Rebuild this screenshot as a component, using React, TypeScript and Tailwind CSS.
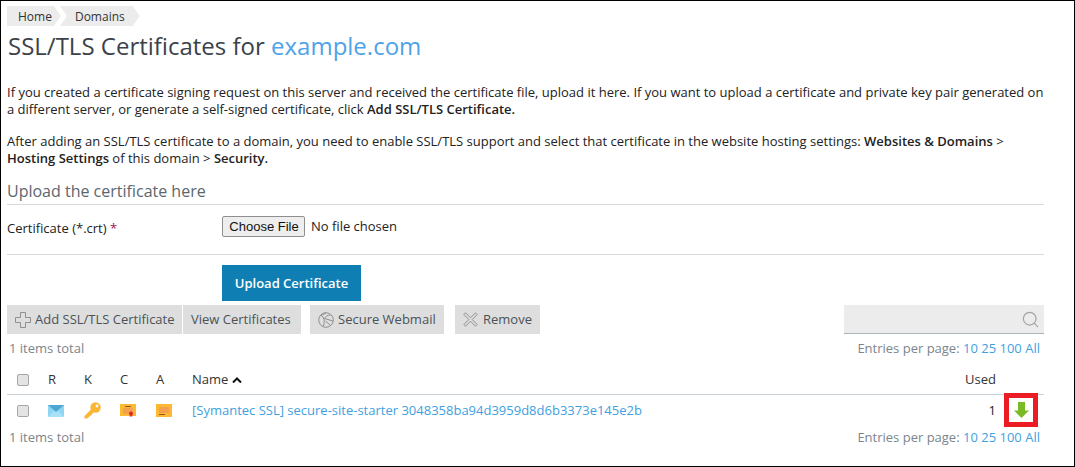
import { Search } from 'lucide-react';

function PlusIcon() {
    return (
        <svg width="16" height="16" viewBox="0 0 16 16" fill="none" stroke="#8f8f8f" strokeWidth="1">
            <path d="M5.5 .5h5v5h5v5h-5v5h-5v-5h-5v-5h5z" />
        </svg>
    );
}

function GlobeIcon() {
    return (
        <svg width="16" height="16" viewBox="0 0 16 16" fill="none" stroke="#8f8f8f" strokeWidth="1">
            <circle cx="8" cy="8" r="7.3" />
            <path d="M3 3.5C6 5 7 8 5.5 14M3 3.5 8 1M12.5 3c-3 0-5 1.5-6 3.5l8.5 2.5M7.5 9l5 4.5" />
        </svg>
    );
}

function CrossIcon() {
    return (
        <svg width="15" height="15" viewBox="0 0 15 15" fill="none" stroke="#8f8f8f" strokeWidth="1">
            <path d="M2.5.8 7.5 5.8 12.5.8 14.2 2.5 9.2 7.5 14.2 12.5 12.5 14.2 7.5 9.2 2.5 14.2.8 12.5 5.8 7.5.8 2.5z" />
        </svg>
    );
}

function MailIcon() {
    return (
        <svg width="16" height="12" viewBox="0 0 16 12" className="block">
            <rect width="16" height="12" fill="#8fd6f4" />
            <path d="M0 0h16L8 7z" fill="#4fa6d3" />
            <path d="M0 12 6 6l2 1.2L10 6l6 6z" fill="#a9e2f8" />
        </svg>
    );
}

function KeyIcon() {
    return (
        <svg width="17" height="17" viewBox="0 0 17 17" className="block">
            <circle cx="11.5" cy="5.5" r="5.2" fill="#fbb534" />
            <circle cx="13" cy="4" r="1.4" fill="#fff" />
            <path d="M8 6.5 .5 14v2.5h2.8l1-1.2h1.2l.2-1.5 1.3-.2L10.5 9z" fill="#fbb534" />
        </svg>
    );
}

function CertIcon() {
    return (
        <svg width="16" height="13" viewBox="0 0 16 13" className="block">
            <rect width="16" height="12" fill="#fdb931" />
            <rect x="3" y="4" width="10" height="6" fill="#f5a04f" />
            <rect x="5" y="2" width="6" height="1" fill="#8a5a20" />
            <path d="M9.8 10h1v3l-.5-.7-.5.7zM11.2 10h1v3l-.5-.7-.5.7z" fill="#dc2b2b" />
            <circle cx="11" cy="9.5" r="2" fill="#dc2b2b" />
        </svg>
    );
}

function AppIcon() {
    return (
        <svg width="16" height="13" viewBox="0 0 16 13" className="block">
            <rect width="16" height="13" fill="#fdb931" />
            <rect x="3" y="3" width="10" height="6" fill="#f5a04f" />
            <rect x="3" y="10" width="6" height="1" fill="#8a5a20" />
        </svg>
    );
}

function DownArrow() {
    return (
        <svg width="15" height="16" viewBox="0 0 15 16" className="block">
            <path d="M4 0h7v8.5h4L7.5 16 0 8.5h4z" fill="#7aba26" />
        </svg>
    );
}

function Pager() {
    return (
        <span className="text-[#7b858c]">
            Entries per page: <a className="text-[#3f9fe0]">10</a> <a className="text-[#3f9fe0]">25</a>{' '}
            <a className="text-[#3f9fe0]">100</a> <a className="text-[#3f9fe0]">All</a>
        </span>
    );
}

function Checkbox() {
    return <span className="block h-[12px] w-[12px] rounded-[2px] border border-[#a6a6a6] bg-[#e4e4e4]" />;
}

export default function App() {
    return (
        <div className="h-[467px] w-[1075px] overflow-hidden border border-black bg-white font-['Open_Sans',sans-serif] text-[13px] leading-[17px] text-[#222]">
            <div className="pl-[6px] pr-[30px] pt-[5px]">
                {/* Breadcrumbs */}
                <div className="flex h-[20px] items-center text-[12px] text-[#333]">
                    <span className="flex h-full items-center bg-[#ececec] pl-[11px] pr-[9px] [clip-path:polygon(0_0,calc(100%-7px)_0,100%_50%,calc(100%-7px)_100%,0_100%)]">
                        Home
                    </span>
                    <span className="-ml-[1px] flex h-full items-center bg-[#ececec] pl-[15px] pr-[15px] [clip-path:polygon(0_0,calc(100%-7px)_0,100%_50%,calc(100%-7px)_100%,0_100%,7px_50%)]">
                        Domains
                    </span>
                </div>

                <h1 className="mt-[3px] pl-[1px] text-[24px] leading-[33px] text-[#3c4248]">
                    SSL/TLS Certificates for <span className="text-[#4da3e8]">example.com</span>
                </h1>

                <p className="-mr-[4px] mt-[22px]">
                    If you created a certificate signing request on this server and received the certificate file, upload it here. If you want to upload a certificate and private key pair generated on a different server, or generate a self-signed certificate, click <strong className="font-semibold">Add SSL/TLS Certificate.</strong>
                </p>
                <p className="mt-[15px]">
                    After adding an SSL/TLS certificate to a domain, you need to enable SSL/TLS support and select that certificate in the website hosting settings: <strong className="font-semibold">Websites &amp; Domains</strong> &gt; <strong className="font-semibold">Hosting Settings</strong> of this domain &gt; <strong className="font-semibold">Security.</strong>
                </p>

                {/* Upload form */}
                <h2 className="mt-[13px] border-b border-[#d9d9d9] pb-[2px] text-[16px] leading-[22px] text-[#5c666e]">
                    Upload the certificate here
                </h2>
                <div className="flex h-[50px] items-center border-b border-[#d9d9d9]">
                    <span className="-mt-[3px] w-[215px]">
                        Certificate (*.crt) <span className="text-[#a0144f]">*</span>
                    </span>
                    <span className="-mt-[7px] flex items-center">
                        <button className="h-[21px] w-[83px] rounded-[2px] border border-[#8f8f8f] bg-[#eeeeee] pl-[1px] font-['Liberation_Sans',sans-serif] text-[13px] leading-[19px] text-[#111]">
                            Choose File
                        </button>
                        <span className="ml-[6px]">No file chosen</span>
                    </span>
                </div>
                <div className="mt-[10px] pl-[215px]">
                    <button className="h-[36px] w-[139px] bg-[#0f7fb3] font-semibold text-white">Upload Certificate</button>
                </div>

                {/* Toolbar */}
                <div className="mt-[4px] flex h-[29px] items-stretch text-[#4b5257]">
                    <span className="flex w-[175px] items-center gap-[4px] bg-[#dedede] pl-[8px]">
                        <PlusIcon />
                        Add SSL/TLS Certificate
                    </span>
                    <span className="ml-[1px] flex w-[118px] items-center bg-[#dedede] pl-[8px]">View Certificates</span>
                    <span className="ml-[9px] flex w-[134px] items-center gap-[4px] bg-[#dedede] pl-[8px]">
                        <GlobeIcon />
                        Secure Webmail
                    </span>
                    <span className="ml-[11px] flex w-[85px] items-center gap-[5px] bg-[#dedede] pl-[8px]">
                        <CrossIcon />
                        Remove
                    </span>
                    <span className="ml-auto flex w-[200px] items-center justify-end border-b border-[#a9b4bb] bg-[#ececec] pr-[4px]">
                        <Search size={19} color="#a3a3a3" strokeWidth={1.5} />
                    </span>
                </div>

                {/* List */}
                <div className="mt-[4px] flex h-[20px] items-center justify-between pl-[2px] pr-[4px] text-[#7b858c]">
                    <span>1 items total</span>
                    <Pager />
                </div>
                <div className="mt-[8px] flex h-[29px] items-center border-b border-[#c9d2d9] pb-[1px] pr-[48px] text-[#333]">
                    <span className="w-[41px] pl-[10px]"><Checkbox /></span>
                    <span className="w-[36px]">R</span>
                    <span className="w-[36px]">K</span>
                    <span className="w-[36px]">C</span>
                    <span className="w-[36px]">A</span>
                    <span className="flex items-center gap-[4px]">
                        Name
                        <svg width="10" height="6" viewBox="0 0 10 6" fill="none" stroke="#111" strokeWidth="2"><path d="M1 5.5 5 1.5l4 4" /></svg>
                    </span>
                    <span className="ml-auto">Used</span>
                </div>
                <div className="relative flex h-[31px] items-center pr-[48px]">
                    <span className="w-[41px] pl-[10px]"><Checkbox /></span>
                    <span className="w-[36px]"><MailIcon /></span>
                    <span className="w-[36px]"><KeyIcon /></span>
                    <span className="w-[36px]"><CertIcon /></span>
                    <span className="w-[36px]"><AppIcon /></span>
                    <a className="text-[#3f9fe0]">[Symantec SSL] secure-site-starter 3048358ba94d3959d8d6b3373e145e2b</a>
                    <span className="ml-auto">1</span>
                    {/* Red callout round the download arrow */}
                    <span className="absolute left-[997px] top-[-2px] flex h-[34px] w-[34px] items-center justify-center border-[5px] border-[#ec1c24]">
                        <DownArrow />
                    </span>
                </div>
                <div className="mt-[1px] flex h-[20px] items-center justify-between pl-[2px] pr-[4px] text-[#7b858c]">
                    <span>1 items total</span>
                    <Pager />
                </div>
            </div>
        </div>
    );
}
